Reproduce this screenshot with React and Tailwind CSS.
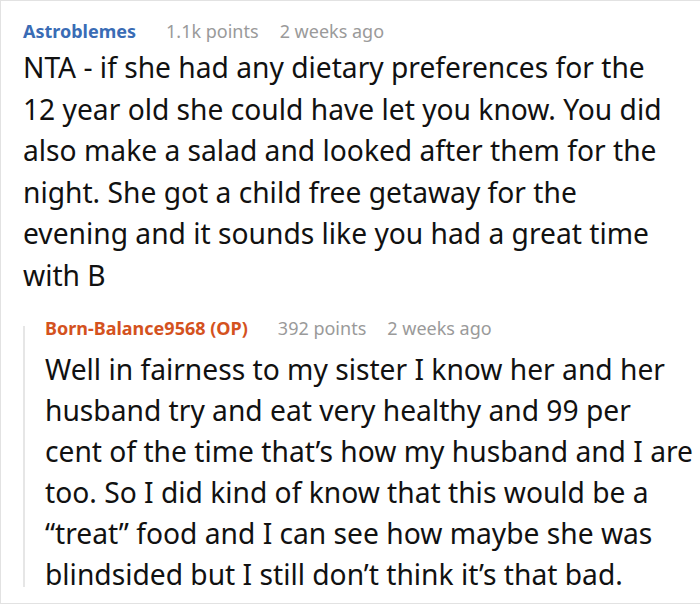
export default function App() {
  return (
    <div className="h-[604px] w-[700px] overflow-hidden bg-white border border-[#e2e2e2] border-r-0 font-['Noto_Sans','Open_Sans',sans-serif] text-[#111]">
      <div className="pl-[22px] pt-[18px]">
        <div className="flex items-baseline text-[18px] leading-6">
          <span className="font-bold text-[#3a6cb5]">Astroblemes</span>
          <span className="ml-[30px] text-[#9a9a9a]">1.1k points</span>
          <span className="ml-[21px] text-[#9a9a9a]">2 weeks ago</span>
        </div>
        <p className="mt-[4px] w-[654px] text-[28.2px] leading-[41.5px]">
          NTA - if she had any dietary preferences for the 12 year old she could have let you know. You did also make a salad and looked after them for the night. She got a child free getaway for the evening and it sounds like you had a great time with B
        </p>
        <div className="mt-[20px] flex">
          <div className="mb-[8px] mt-[10px] w-[2px] shrink-0 bg-[#e6e6e6]" />
          <div className="pl-[20px]">
            <div className="flex items-baseline text-[18px] leading-6">
              <span className="font-bold text-[#d4521e]">Born-Balance9568 (OP)</span>
              <span className="ml-[30px] text-[#9a9a9a]">392 points</span>
              <span className="ml-[21px] text-[#9a9a9a]">2 weeks ago</span>
            </div>
            <p className="mt-[9px] w-[654px] text-[28.2px] leading-[41px]">
              Well in fairness to my sister I know her and her husband try and eat very healthy and 99 per
              <br />
              cent of the time that’s how my husband and I are too. So I did kind of know that this would be a “treat” food and I can see how maybe she was blindsided but I still don’t think it’s that bad.
            </p>
          </div>
        </div>
      </div>
    </div>
  );
}
